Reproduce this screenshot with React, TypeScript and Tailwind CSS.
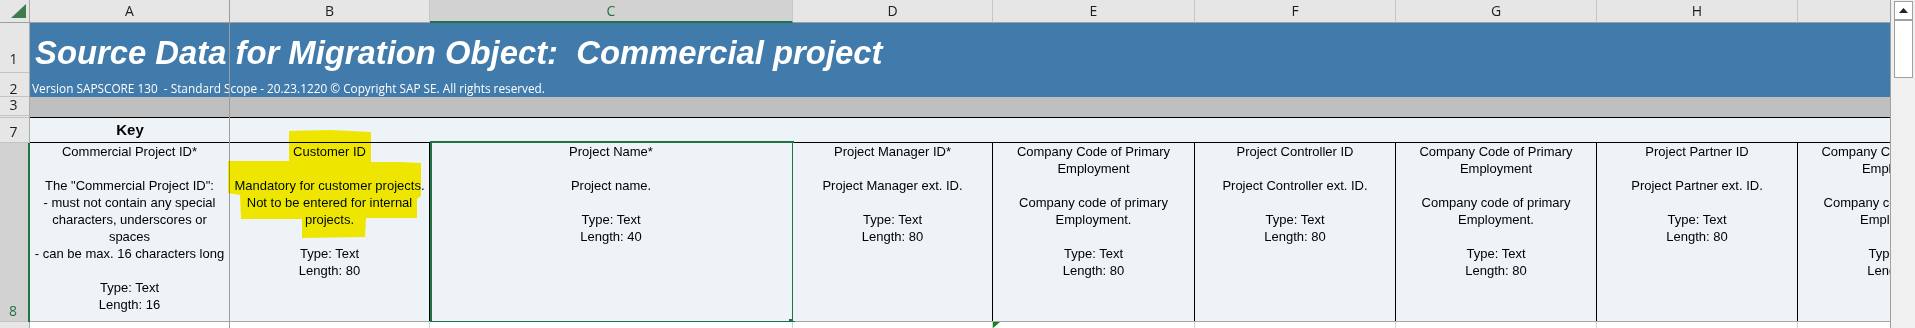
import React from "react";

type Col = { l: string; w: string; lines: string[] };

const EMP = [
  "Company Code of Primary",
  "Employment",
  "",
  "Company code of primary",
  "Employment.",
  "",
  "Type: Text",
  "Length: 80",
];

const cols: Col[] = [
  {
    l: "A",
    w: "w-[200px]",
    lines: [
      "Commercial Project ID*",
      "",
      'The "Commercial Project ID":',
      "- must not contain any special",
      "characters, underscores or",
      "spaces",
      "- can be max. 16 characters long",
      "",
      "Type: Text",
      "Length: 16",
    ],
  },
  {
    l: "B",
    w: "w-[200px]",
    lines: [
      "Customer ID",
      "",
      "Mandatory for customer projects.",
      "Not to be entered for internal",
      "projects.",
      "",
      "Type: Text",
      "Length: 80",
    ],
  },
  {
    l: "C",
    w: "w-[363px]",
    lines: ["Project Name*", "", "Project name.", "", "Type: Text", "Length: 40"],
  },
  {
    l: "D",
    w: "w-[200px]",
    lines: ["Project Manager ID*", "", "Project Manager ext. ID.", "", "Type: Text", "Length: 80"],
  },
  { l: "E", w: "w-[202px]", lines: EMP },
  {
    l: "F",
    w: "w-[201px]",
    lines: ["Project Controller ID", "", "Project Controller ext. ID.", "", "Type: Text", "Length: 80"],
  },
  { l: "G", w: "w-[201px]", lines: EMP },
  {
    l: "H",
    w: "w-[201px]",
    lines: ["Project Partner ID", "", "Project Partner ext. ID.", "", "Type: Text", "Length: 80"],
  },
  { l: "I", w: "w-[201px]", lines: EMP },
];

const UI = "font-['Open_Sans',sans-serif]";

function RowNum({
  children,
  cls,
}: {
  children?: React.ReactNode;
  cls: string;
}) {
  return (
    <div
      className={`box-border shrink-0 flex items-end justify-center pr-[2px] border-b border-[#c3c3c3] text-[14px] leading-[14px] ${UI} ${cls}`}
    >
      {children}
    </div>
  );
}

export default function App() {
  return (
    <div className="flex w-[1915px] h-[328px] overflow-hidden bg-white font-['Liberation_Sans',Arial,sans-serif]">
      <div className="relative w-[1891px] shrink-0 h-full overflow-hidden box-border border-r border-[#a0a0a0] flex flex-col">
        {/* column headers */}
        <div className="flex h-[23px] shrink-0">
          <div className="relative w-[30px] shrink-0 h-full box-border border-r border-b border-r-[#ababab] border-b-[#9e9e9e] bg-[#e6e6e6]">
            <svg className="absolute left-0 top-0" width="29" height="22" viewBox="0 0 29 22">
              <polygon points="26,4 26,18 11,18" fill="#3b7b4c" />
            </svg>
          </div>
          {cols.map((c) =>
            c.l === "C" ? (
              <div
                key={c.l}
                className={`${c.w} shrink-0 h-full box-border border-r border-b-2 border-r-[#c6c6c6] border-b-[#217346] bg-[#d2d2d2] text-center text-[14px] leading-[22px] text-[#217346] ${UI}`}
              >
                {c.l}
              </div>
            ) : (
              <div
                key={c.l}
                className={`${c.w} shrink-0 h-full box-border border-r border-b border-r-[#c6c6c6] border-b-[#9e9e9e] bg-[#e6e6e6] text-center text-[14px] leading-[22px] text-[#1e1e1e] ${UI}`}
              >
                {c.l}
              </div>
            )
          )}
        </div>

        {/* rows 1-2: title */}
        <div className="flex h-[74px] shrink-0">
          <div className="w-[30px] shrink-0 flex flex-col bg-[#e6e6e6] box-border border-r border-[#ababab] text-[#1e1e1e]">
            <RowNum cls="h-[50px] pb-[6px]">1</RowNum>
            <RowNum cls="h-[24px] pb-0">2</RowNum>
          </div>
          <div className="flex-1 min-w-0 bg-[#417bab] flex flex-col text-white">
            <div className="h-[50px] shrink-0 pt-[14px] pl-[5px] text-[32.8px] leading-[32px] font-bold italic whitespace-pre">
              Source Data for Migration Object:  Commercial project
            </div>
            <div className={`h-[24px] shrink-0 pt-[9px] pl-[2px] text-[11.8px] leading-[12px] whitespace-pre ${UI}`}>
              Version SAPSCORE 130  - Standard Scope - 20.23.1220 © Copyright SAP SE. All rights reserved.
            </div>
          </div>
        </div>

        {/* row 3 */}
        <div className="flex h-[21px] shrink-0">
          <div className="w-[30px] shrink-0 flex flex-col bg-[#e6e6e6] box-border border-r border-[#ababab] text-[#1e1e1e]">
            <RowNum cls="h-[19px] pb-[3px]">3</RowNum>
            <div className="h-[2px] shrink-0 box-border border-b border-[#c3c3c3]" />
          </div>
          <div className="flex-1 min-w-0 flex flex-col">
            <div className="h-[20px] bg-[#bfbfbf]" />
            <div className="h-px bg-black" />
          </div>
        </div>

        {/* row 7 */}
        <div className="flex h-[25px] shrink-0">
          <div className="w-[30px] shrink-0 flex flex-col bg-[#e6e6e6] box-border border-r border-[#ababab] text-[#1e1e1e]">
            <RowNum cls="h-[25px] pb-[3px]">7</RowNum>
          </div>
          <div className="flex-1 min-w-0 flex flex-col">
            <div className="h-[24px] bg-[#eef3f8] flex">
              <div className="w-[200px] shrink-0 text-center text-[15px] leading-[24px] font-bold text-black">Key</div>
            </div>
            <div className="h-px bg-black" />
          </div>
        </div>

        {/* row 8 */}
        <div className="flex h-[179px] shrink-0">
          <div className="w-[30px] shrink-0 flex flex-col bg-[#d2d2d2] box-border border-r-2 border-[#217346] text-[#217346]">
            <RowNum cls="h-[179px] pb-[3px] border-[#a6a6a6]">8</RowNum>
          </div>
          <div className="flex-1 min-w-0 flex flex-col">
            <div className="h-[178px] flex">
              {cols.map((c) => (
                <div
                  key={c.l}
                  className={`relative ${c.w} shrink-0 h-full box-border border-r border-black bg-[#eef3f8] text-center text-[13px] leading-[17px] text-black whitespace-nowrap`}
                >
                  {c.lines.map((ln, i) => (
                    <div key={i} className="h-[17px]">
                      {ln}
                    </div>
                  ))}
                  {c.l === "C" && (
                    <>
                      <div className="absolute left-0 top-[-2px] w-[364px] bottom-[-2px] box-border border-2 border-[#217346]" />
                      <div className="absolute left-[359px] top-[176px] w-[6px] h-[5px] bg-[#217346]" />
                    </>
                  )}
                </div>
              ))}
            </div>
            <div className="h-px bg-[#a6a6a6]" />
          </div>
        </div>

        {/* row 9 */}
        <div className="flex flex-1 min-h-0">
          <div className="w-[30px] shrink-0 bg-[#e6e6e6] box-border border-r border-[#ababab]" />
          {cols.map((c) => (
            <div key={c.l} className={`relative ${c.w} shrink-0 h-full box-border border-r border-[#d4d4d4] bg-white`}>
              {c.l === "E" && (
                <svg className="absolute left-0 top-0" width="8" height="7" viewBox="0 0 8 7">
                  <polygon points="0,0 7,0 0,6" fill="#13821b" />
                </svg>
              )}
            </div>
          ))}
        </div>

        {/* freeze pane line */}
        <div className="absolute left-[229px] top-0 bottom-0 w-px bg-[#9c9c9c]" />

        {/* yellow marker highlight */}
        <svg
          className="absolute left-0 top-0 pointer-events-none mix-blend-darken"
          width="1890"
          height="328"
          viewBox="0 0 1890 328"
        >
          <path
            d="M289 131 L330 130 L371 132 L371 162 L400 162 L421 163 L421 196 L417 199 L417 218 L366 218 L365 237 L302 238 L302 219 L241 219 L240 195 L228 193 L228 161 L289 161 Z"
            fill="#eee600"
          />
        </svg>
      </div>

      {/* vertical scrollbar */}
      <div className="w-[24px] shrink-0 h-full bg-[#f0f0f0] flex flex-col pl-[3px] pt-px">
        <div className="w-[19px] h-[19px] box-border border border-[#a0a0a0] bg-white flex items-center justify-center">
          <svg width="9" height="5" viewBox="0 0 9 5">
            <polygon points="4.5,0 9,5 0,5" fill="#222" />
          </svg>
        </div>
        <div className="w-[19px] h-[58px] box-border border border-[#a0a0a0] bg-white" />
      </div>
    </div>
  );
}
